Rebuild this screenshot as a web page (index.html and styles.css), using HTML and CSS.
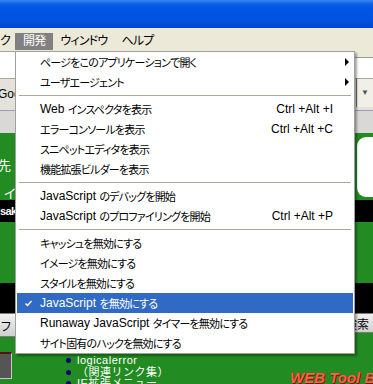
FILE: index.html
```html
<!DOCTYPE html>
<html>

<head>
    <title>開発メニュー</title>
    <link rel="stylesheet" href="styles.css">
</head>

<body>
    <!-- Window chrome -->
    <div class="titlebar"></div>
    <div class="menubar">
        <span class="menubar-item first">ク</span>
        <span class="menubar-item open">開発</span>
        <span class="menubar-item">ウィンドウ</span>
        <span class="menubar-item">ヘルプ</span>
    </div>
    <div class="toolbar">
        <div class="address"></div>
        <div class="search"></div>
    </div>
    <div class="bookmarks">
        <span class="bookmark">Google</span>
        <span class="bookmark-more">&#9660;</span>
    </div>
    <div class="tabbar"></div>

    <!-- Page content -->
    <div class="page">
        <div class="intro">
            <div class="intro-text">
                <p class="line-one">先</p>
                <p class="line-two">イ</p>
            </div>
            <div class="side-panel"></div>
        </div>
        <div class="band band-name">sak</div>
        <div class="gap"></div>
        <div class="band band-tall"></div>
        <div class="search-row">
            <button class="btn btn-left">フ</button>
            <button class="btn btn-right">検索</button>
        </div>
        <div class="footer">
            <div class="dark-box"></div>
            <ul class="links">
                <li><span class="dot"></span>logicalerror</li>
                <li><span class="dot"></span>（関連リンク集）</li>
                <li><span class="dot"></span>IE拡張メニュー</li>
            </ul>
            <div class="logo">WEB Tool Box</div>
        </div>
    </div>

    <!-- Develop menu -->
    <div class="dropdown">
        <div class="menu-item">ページをこのアプリケーションで開く<span class="arrow"></span></div>
        <div class="menu-item">ユーザエージェント<span class="arrow"></span></div>
        <div class="separator"></div>
        <div class="menu-item"><span class="latin">Web </span>インスペクタを表示<span class="shortcut">Ctrl +Alt +I</span></div>
        <div class="menu-item">エラーコンソールを表示<span class="shortcut">Ctrl +Alt +C</span></div>
        <div class="menu-item">スニペットエディタを表示</div>
        <div class="menu-item">機能拡張ビルダーを表示</div>
        <div class="separator"></div>
        <div class="menu-item"><span class="latin">JavaScript </span>のデバッグを開始</div>
        <div class="menu-item"><span class="latin">JavaScript </span>のプロファイリングを開始<span class="shortcut">Ctrl +Alt +P</span></div>
        <div class="separator"></div>
        <div class="menu-item">キャッシュを無効にする</div>
        <div class="menu-item">イメージを無効にする</div>
        <div class="menu-item">スタイルを無効にする</div>
        <div class="menu-item selected">
            <svg class="check" width="7" height="7" viewBox="0 0 7 7">
                <polyline points="0.5,3.5 2.5,5.5 6.5,1" fill="none" stroke="#fff" stroke-width="1.4" />
            </svg><span class="latin">JavaScript </span>を無効にする
        </div>
        <div class="menu-item"><span class="latin">Runaway JavaScript </span>タイマーを無効にする</div>
        <div class="menu-item">サイト固有のハックを無効にする</div>
    </div>
</body>

</html>
```

FILE: styles.css
```css
body {
    margin: 0;
    width: 373px;
    height: 384px;
    overflow: hidden;
    position: relative;
    font-family: "Liberation Sans", "Noto Sans CJK JP", sans-serif;
    font-size: 12px;
    font-feature-settings: "palt";
    color: #000;
    background-color: #228b22;
}

/* window chrome */
.titlebar {
    height: 28px;
    background: linear-gradient(#3a86f2 0, #0c5fe6 4px, #0055e5 8px, #0053df 20px, #0047cf 27px, #0046cc 28px);
}

.menubar {
    height: 23px;
    padding-top: 5px;
    box-sizing: border-box;
    display: flex;
    background-color: #ece9d8;
    letter-spacing: -0.8px;
}

.menubar-item {
    height: 17px;
    line-height: 17px;
    padding: 0 7px;
}

.menubar-item.first {
    padding: 0 5px 0 0;
}

.menubar-item.open {
    padding: 0 8px;
    background-color: #808080;
    color: #fff;
}

.toolbar {
    height: 28px;
    display: flex;
    background-color: #ece9d8;
    border-bottom: 1px solid #a9a69a;
    box-sizing: border-box;
}

.address {
    flex: 1;
    background-color: #fff;
    border-top: 1px solid #a5a5a5;
}

.search {
    width: 180px;
    margin: 6px 0 0 6px;
    background-color: #fff;
    border-left: 1px solid #9a9a9a;
    border-top: 1px solid #9a9a9a;
}

.bookmarks {
    height: 31px;
    display: flex;
    align-items: flex-start;
    background-color: #e4e2da;
}

.bookmark {
    margin: 8px 0 0 -2px;
}

.bookmark-more {
    margin-left: auto;
    width: 16px;
    height: 28px;
    border-left: 1px solid #6d6d6d;
    background-color: #f1efe8;
    color: #555;
    font-size: 8px;
    text-align: center;
    line-height: 28px;
}

.tabbar {
    height: 23px;
    background-color: #dad8d6;
    border-top: 1px solid #9c9ac4;
    box-sizing: border-box;
}

/* page */
.page {
    color: #fff;
}

.intro {
    height: 67px;
    display: flex;
    justify-content: space-between;
}

.intro-text p {
    margin: 0;
    font-size: 13px;
}

.line-one {
    padding-top: 22px;
    margin-left: -2px !important;
}

.line-two {
    padding-top: 9px;
    padding-left: 4px;
}

.side-panel {
    width: 16px;
    height: 60px;
    margin-top: 4px;
    background-color: #fff;
    border-radius: 9px 0 0 9px;
}

.band {
    background-color: #000;
}

.band-name {
    height: 22px;
    line-height: 22px;
    font-size: 11px;
    font-weight: bold;
    letter-spacing: -0.6px;
}

.gap {
    height: 61px;
}

.band-tall {
    height: 30px;
}

.search-row {
    height: 24px;
    display: flex;
    justify-content: space-between;
    overflow: hidden;
}

.btn {
    font-family: "Liberation Sans", "Noto Sans CJK JP", sans-serif;
    font-size: 12px;
    color: #000;
    border: 1px solid #7a7a7a;
    background: linear-gradient(#f2f2f2, #cfcfcf);
    padding: 0;
}

.btn-left {
    width: 40px;
    text-align: left;
    border-left: none;
}

.btn-right {
    height: 20px;
    padding: 0 4px 0 5px;
    border-radius: 2px 0 0 2px;
    border-right: none;
}

.footer {
    display: flex;
    align-items: flex-start;
    overflow: hidden;
    height: 47px;
}

.dark-box {
    flex-shrink: 0;
    width: 11px;
    height: 24px;
    margin-top: 15px;
    background-color: #555;
    border-top: 2px solid #5a1010;
    border-right: 1px solid #c8c8c8;
    border-bottom: 1px solid #c8c8c8;
}

.links {
    flex-shrink: 0;
    list-style: none;
    margin: 18px 0 0 54px;
    padding: 0;
    width: 224px;
    font-size: 11px;
    font-feature-settings: normal;
    letter-spacing: 0.5px;
}

.links li {
    height: 11.5px;
    line-height: 11.5px;
    white-space: nowrap;
}

.dot {
    display: inline-block;
    width: 5px;
    height: 5px;
    margin: 0 6px 1px 0;
    border-radius: 50%;
    background-color: #00007a;
}

.logo {
    flex-shrink: 0;
    margin-top: 32px;
    white-space: nowrap;
    font-size: 15px;
    font-weight: bold;
    font-style: italic;
    color: #ff6242;
    text-shadow: 1px 1px 0 #6a1a10, 1px 0 0 #8a2a18;
}

/* develop menu */
.dropdown {
    position: absolute;
    left: 15px;
    top: 51px;
    width: 338px;
    background-color: #fff;
    border: 1px solid #a0a0a0;
    box-shadow: 2px 2px 2px rgba(0, 0, 0, 0.35);
}

.menu-item {
    height: 20px;
    margin: 0 1px;
    padding: 0 20px 0 23px;
    display: flex;
    align-items: center;
    white-space: nowrap;
    font-size: 11px;
    letter-spacing: -0.8px;
}

.menu-item.selected {
    background-color: #316ac5;
    color: #fff;
}

.latin,
.shortcut {
    font-size: 12px;
    letter-spacing: 0;
    white-space: pre;
}

.shortcut {
    margin-left: auto;
}

.arrow {
    margin-left: auto;
    margin-right: -16px;
    width: 0;
    height: 0;
    border-left: 4px solid #000;
    border-top: 4px solid transparent;
    border-bottom: 4px solid transparent;
}

.check {
    margin-left: -15px;
    margin-right: 8px;
}

.separator {
    height: 7px;
    margin: 0 3px;
    display: flex;
    align-items: center;
}

.separator::before {
    content: "";
    flex: 1;
    height: 1px;
    background-color: #aca899;
}
```
